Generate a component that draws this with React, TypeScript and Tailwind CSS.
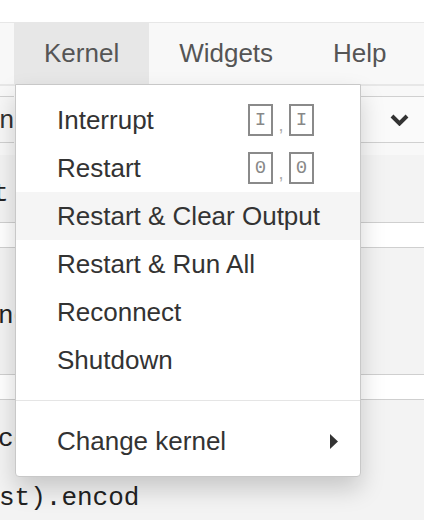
const items = [
  { label: "Interrupt", keys: ["I", "I"] },
  { label: "Restart", keys: ["0", "0"] },
  { label: "Restart & Clear Output", active: true },
  { label: "Restart & Run All" },
  { label: "Reconnect" },
  { label: "Shutdown" },
];

const Key = ({ k }: { k: string }) => (
  <span className="w-[25px] h-[32px] border-2 border-[#8a8a8a] flex items-center justify-center font-['Liberation_Mono',monospace] text-[19px] text-[#888]">
    {k}
  </span>
);

const KernelMenu = () => (
  <div className="absolute left-[15px] top-[84px] w-[346px] bg-white border border-[#c8c8c8] rounded-b-[4px] shadow-[0_12px_24px_rgba(0,0,0,0.18)] pt-[11px] pb-[11px] text-[26px] text-[#333]">
    {items.map((item) => (
      <div
        key={item.label}
        className={`h-[48px] flex items-center pl-[41px] ${item.active ? "bg-[#f5f5f5]" : ""}`}
      >
        <span>{item.label}</span>
        {item.keys && (
          <div className="ml-auto mr-[46px] flex items-center">
            <Key k={item.keys[0]} />
            <span className="w-[16px] text-center text-[18px] text-[#aaa] mt-[10px]">,</span>
            <Key k={item.keys[1]} />
          </div>
        )}
      </div>
    ))}
    <div className="my-[16px] h-px bg-[#e5e5e5]" />
    <div className="h-[48px] flex items-center pl-[41px] pr-[22px]">
      <span>Change kernel</span>
      <svg className="ml-auto" width="8" height="15" viewBox="0 0 8 15">
        <path d="M0 0 L8 7.5 L0 15 Z" fill="#333" />
      </svg>
    </div>
  </div>
);

export default function App() {
  return (
    <div className="relative w-[424px] h-[520px] overflow-hidden bg-white font-['Liberation_Sans',Arial,sans-serif]">
      {/* MENUBAR */}
      <div className="h-[22px] bg-white" />
      <div className="h-[62px] border-t border-[#e7e7e7] bg-[#f8f8f8] flex text-[26px] text-[#555]">
        <div className="w-[14px]" />
        <div className="px-[30px] flex items-center bg-[#e7e7e7]">Kernel</div>
        <div className="px-[30px] flex items-center">Widgets</div>
        <div className="px-[30px] flex items-center">Help</div>
      </div>
      {/* TOOLBAR */}
      <div className="h-[71px] border-t-2 border-[#e7e7e7] bg-[#f8f8f8] pt-[10px] flex">
        <div className="h-[47px] w-[40px] -ml-[26px] border-y border-[#d0d0d0] bg-[#f7f7f7] flex items-center justify-end text-[26px] text-[#333]">
          n
        </div>
        <div className="ml-auto h-[47px] w-[90px] -mr-[10px] border-y border-[#d0d0d0] bg-[#fafafa] flex items-center pl-[46px]">
          <svg width="19" height="12" viewBox="0 0 19 12">
            <path d="M2 2 L9.5 9.5 L17 2" fill="none" stroke="#333" strokeWidth="4" />
          </svg>
        </div>
      </div>
      {/* CELLS */}
      <div className="font-['Liberation_Mono',monospace] text-[26px] text-[#222]">
        <div className="h-[68px] bg-[#f3f3f3] border-b border-[#cfcfcf] flex items-center">
          <span className="-ml-[7px] mt-[12px]">t</span>
        </div>
        <div className="h-[25px] bg-white border-b border-[#cfcfcf]" />
        <div className="h-[127px] bg-[#f3f3f3] border-b border-[#cfcfcf] pt-[49px]">
          <span className="-ml-[2px]">ne</span>
        </div>
        <div className="h-[25px] bg-white border-b border-[#cfcfcf]" />
        <div className="h-[120px] bg-[#f3f3f3] pt-[22px] leading-[34px]">
          <div className="-ml-[2px]">ce</div>
          <div className="mt-[25px] -ml-[1px]">st).encod</div>
        </div>
      </div>
      <KernelMenu />
    </div>
  );
}
